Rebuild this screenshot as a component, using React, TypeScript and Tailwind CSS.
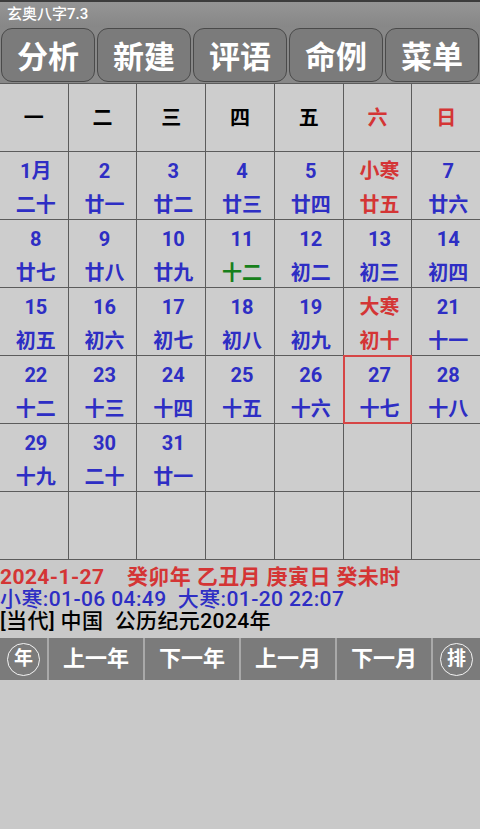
const weekdays = [
  { label: '一', red: false },
  { label: '二', red: false },
  { label: '三', red: false },
  { label: '四', red: false },
  { label: '五', red: false },
  { label: '六', red: true },
  { label: '日', red: true },
]

type Day = { top: string; bottom: string; tone?: 'red' | 'greenBottom'; today?: boolean } | null

const days: Day[] = [
  { top: '1月', bottom: '二十' },
  { top: '2', bottom: '廿一' },
  { top: '3', bottom: '廿二' },
  { top: '4', bottom: '廿三' },
  { top: '5', bottom: '廿四' },
  { top: '小寒', bottom: '廿五', tone: 'red' },
  { top: '7', bottom: '廿六' },
  { top: '8', bottom: '廿七' },
  { top: '9', bottom: '廿八' },
  { top: '10', bottom: '廿九' },
  { top: '11', bottom: '十二', tone: 'greenBottom' },
  { top: '12', bottom: '初二' },
  { top: '13', bottom: '初三' },
  { top: '14', bottom: '初四' },
  { top: '15', bottom: '初五' },
  { top: '16', bottom: '初六' },
  { top: '17', bottom: '初七' },
  { top: '18', bottom: '初八' },
  { top: '19', bottom: '初九' },
  { top: '大寒', bottom: '初十', tone: 'red' },
  { top: '21', bottom: '十一' },
  { top: '22', bottom: '十二' },
  { top: '23', bottom: '十三' },
  { top: '24', bottom: '十四' },
  { top: '25', bottom: '十五' },
  { top: '26', bottom: '十六' },
  { top: '27', bottom: '十七', today: true },
  { top: '28', bottom: '十八' },
  { top: '29', bottom: '十九' },
  { top: '30', bottom: '二十' },
  { top: '31', bottom: '廿一' },
  ...Array<Day>(11).fill(null),
]

const topButtons = ['分析', '新建', '评语', '命例', '菜单']
const navButtons = ['上一年', '下一年', '上一月', '下一月']

const font = 'font-["Roboto","Noto_Sans_CJK_SC",sans-serif]'

function DayCell({ day }: { day: Day }) {
  if (!day) return <div className="h-[67px] bg-[#cdcdcd]" />
  const topColor = day.tone === 'red' ? 'text-[#d43535]' : 'text-[#2e2ec4]'
  const bottomColor =
    day.tone === 'red' ? 'text-[#d43535]' : day.tone === 'greenBottom' ? 'text-[#17801b]' : 'text-[#2e2ec4]'
  return (
    <div
      className={`h-[67px] bg-[#cdcdcd] flex flex-col items-center pt-[2px] pl-1 font-bold text-[20px] leading-[34px] ${
        day.today ? 'relative z-10 shadow-[0_0_0_1px_#d64545,inset_0_0_0_1px_#d64545]' : ''
      }`}
    >
      <span className={topColor}>{day.top}</span>
      <span className={bottomColor}>{day.bottom}</span>
    </div>
  )
}

function Circle({ label }: { label: string }) {
  return (
    <div className="w-[47px] shrink-0 bg-[#7b7b7b] flex items-center justify-center">
      <span className="w-[33px] h-[33px] rounded-full border border-white/90 flex items-center justify-center text-white font-bold text-[19px]">
        {label}
      </span>
    </div>
  )
}

export default function App() {
  return (
    <div className={`min-h-screen bg-[#c9c9c9] flex flex-col ${font}`}>
      <header className="h-[27px] border-t-2 border-[#3c3c3c] bg-gradient-to-b from-[#959595] to-[#878787] flex items-center px-[7px] shrink-0">
        <span className="text-white text-[15px] font-medium leading-none">玄奥八字7.3</span>
      </header>
      <nav className="h-[56px] bg-[#888] flex gap-[2px] px-px pt-px shrink-0">
        {topButtons.map(b => (
          <button
            key={b}
            className="flex-1 h-[54px] rounded-[11px] border border-[#4a4a4a] bg-[#7b7b7b] text-white font-bold text-[31px] leading-none pt-1 flex items-center justify-center"
          >
            {b}
          </button>
        ))}
      </nav>
      <section className="grid grid-cols-7 gap-px bg-[#5c5c5c] py-px shrink-0">
        {weekdays.map(w => (
          <div
            key={w.label}
            className={`h-[67px] bg-[#cdcdcd] flex items-center justify-center font-bold text-[20px] ${
              w.red ? 'text-[#d43535]' : 'text-black'
            }`}
          >
            {w.label}
          </div>
        ))}
        {days.map((d, i) => (
          <DayCell key={i} day={d} />
        ))}
      </section>
      <section className="pt-[6px] text-[21px] leading-[22px] tracking-[0.4px] font-medium whitespace-pre">
        <p className="text-[#d43535] font-bold">2024-1-27    癸卯年 乙丑月 庚寅日 癸未时</p>
        <p className="text-[#2e2ec4]">小寒:01-06 04:49  大寒:01-20 22:07</p>
        <p className="text-black">[当代] 中国  公历纪元2024年</p>
      </section>
      <footer className="mt-[6px] h-[42px] flex gap-[2px] bg-[#a9a9a9] shrink-0">
        <Circle label="年" />
        {navButtons.map(b => (
          <button
            key={b}
            className="flex-1 bg-[#7b7b7b] text-white font-bold text-[22px] leading-none flex items-center justify-center"
          >
            {b}
          </button>
        ))}
        <Circle label="排" />
      </footer>
    </div>
  )
}
